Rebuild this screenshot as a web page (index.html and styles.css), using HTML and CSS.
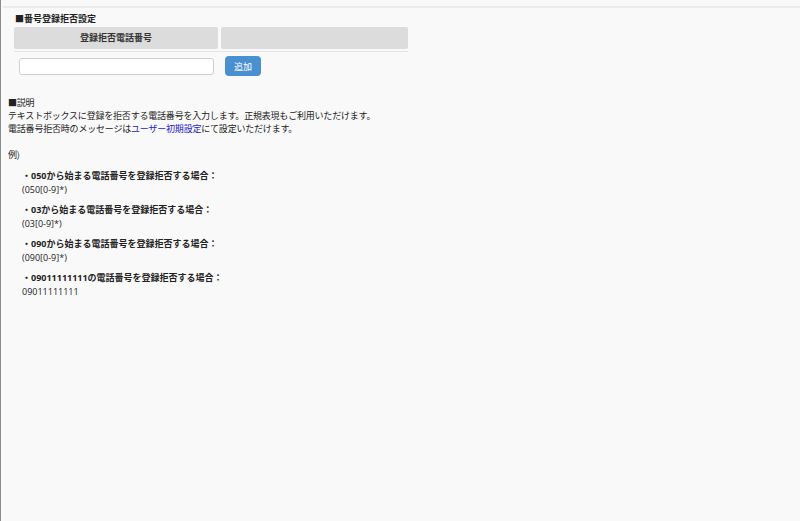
FILE: index.html
```html
<!DOCTYPE html>
<html lang="ja">
<head>
 <meta charset="UTF-8">
 <title>番号登録拒否設定</title>
 <link rel="stylesheet" href="styles.css">
</head>
<body>
 <div class="page">
 <div class="topbar"></div>

 <div class="setting">
 <div class="title">■番号登録拒否設定</div>
 <div class="table-head">
 <div class="th">登録拒否電話番号</div>
 <div class="th"></div>
 </div>
 <div class="add-row">
 <input type="text" class="num-input">
 <button class="add-btn">追加</button>
 </div>
 </div>

 <div class="help">
 <div>■説明</div>
 <div>テキストボックスに登録を拒否する電話番号を入力します。正規表現もご利用いただけます。</div>
 <div>電話番号拒否時のメッセージは<a href="#" class="link">ユーザー初期設定</a>にて設定いただけます。</div>

 <div class="ex-label">例)</div>
 <div class="examples">
 <div class="example">
 <div class="ex-title">・050から始まる電話番号を登録拒否する場合：</div>
 <div class="ex-code">(050[0-9]*)</div>
 </div>
 <div class="example">
 <div class="ex-title">・03から始まる電話番号を登録拒否する場合：</div>
 <div class="ex-code">(03[0-9]*)</div>
 </div>
 <div class="example">
 <div class="ex-title">・090から始まる電話番号を登録拒否する場合：</div>
 <div class="ex-code">(090[0-9]*)</div>
 </div>
 <div class="example">
 <div class="ex-title">・09011111111の電話番号を登録拒否する場合：</div>
 <div class="ex-code">09011111111</div>
 </div>
 </div>
 </div>
 </div>
</body>
</html>
```

FILE: styles.css
```css
* {
margin: 0;
padding: 0;
box-sizing: border-box;
}

body {
background: #f9f9f9;
font-family: "Noto Sans CJK JP", "Liberation Sans", sans-serif;
font-size: 9px;
line-height: 13px;
color: #222;
}

.page {
min-height: 100vh;
border-left: 1px solid #8c8c8c;
padding-top: 6px;
}

.topbar {
height: 2px;
margin-left: 2px;
background: #ebebeb;
}

.setting {
padding: 4px 0 0 13px;
}

.title {
font-weight: bold;
padding-left: 1px;
}

.table-head {
display: flex;
gap: 3px;
width: 394px;
margin-top: 2px;
padding-bottom: 2px;
border-bottom: 1px solid #e4e4e4;
}

.th {
height: 22px;
background: #dcdcdc;
border-radius: 2px;
font-weight: bold;
text-align: center;
line-height: 22px;
color: #333;
}

.th:first-child {
width: 204px;
}

.th:last-child {
flex: 1;
}

.add-row {
display: flex;
align-items: center;
gap: 11px;
margin-top: 4px;
padding-left: 5px;
}

.num-input {
width: 195px;
height: 17px;
background: #fff;
border: 1px solid #cfcfcf;
border-radius: 3px;
}

.add-btn {
width: 36px;
height: 20px;
background: #4a8fd0;
border: none;
border-radius: 4px;
color: #fff;
font-family: inherit;
font-size: 9px;
}

.help {
padding: 20px 0 0 7px;
letter-spacing: -0.2px;
}

.link {
color: #2323c8;
text-decoration: none;
}

.ex-label {
margin-top: 13px;
}

.examples {
display: flex;
flex-direction: column;
gap: 7px;
padding: 8px 0 0 14px;
letter-spacing: 0;
}

.ex-title,
.ex-code {
font-family: "Open Sans", "Noto Sans CJK JP", sans-serif;
}

.ex-title {
font-weight: bold;
}

.ex-code {
margin-top: 1px;
}
```
